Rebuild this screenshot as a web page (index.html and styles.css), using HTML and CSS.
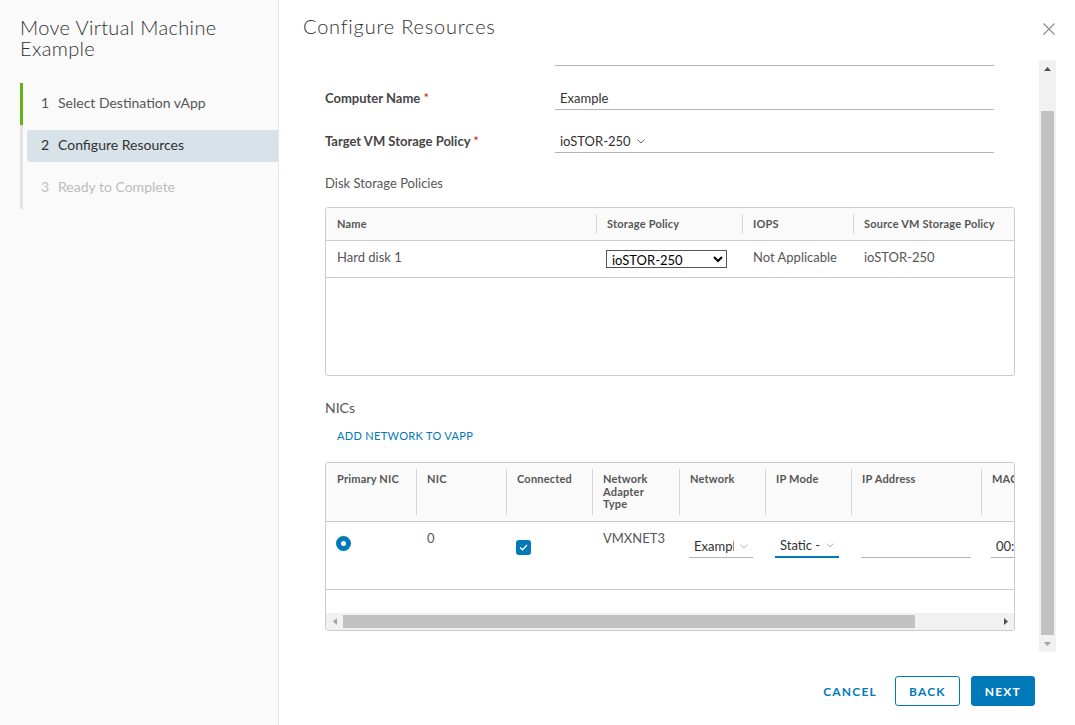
FILE: index.html
```html
<!DOCTYPE html>
<html lang="en">
<head>
  <meta charset="UTF-8" />
  <meta name="viewport" content="width=device-width, initial-scale=1.0"/>
  <title>Move Virtual Machine</title>
  <link rel="stylesheet" href="styles.css">
</head>
<body>
  <div class="wizard">
    <aside class="sidebar">
      <h1 class="wizard-title">Move Virtual Machine Example</h1>
      <ol class="steps">
        <li class="step done"><div class="step-label"><span class="num">1</span>Select Destination vApp</div></li>
        <li class="step active"><div class="step-label"><span class="num">2</span>Configure Resources</div></li>
        <li class="step disabled"><div class="step-label"><span class="num">3</span>Ready to Complete</div></li>
      </ol>
    </aside>

    <main class="panel">
      <header class="panel-header">
        <h2>Configure Resources</h2>
        <button class="close" type="button" aria-label="Close">
          <svg width="12" height="12" viewBox="0 0 12 12"><path d="M0.5 0.5 L11.5 11.5 M11.5 0.5 L0.5 11.5" stroke="#8c8c8c" stroke-width="1.1" fill="none"/></svg>
        </button>
      </header>

      <div class="panel-body">
        <div class="body-viewport" id="body-viewport">
          <div class="body-inner">
            <div class="form-row first">
              <span class="label-space"></span>
              <input type="text" id="vm-name" aria-label="Name"/>
            </div>

            <div class="form-row">
              <label for="computer-name">Computer Name <span class="req">*</span></label>
              <input type="text" id="computer-name" value="Example"/>
            </div>

            <div class="form-row">
              <label>Target VM Storage Policy <span class="req">*</span></label>
              <div class="dropdown wide">
                <span>ioSTOR-250</span>
                <svg class="chevron" width="8" height="5" viewBox="0 0 8 5"><polyline points="0.5,0.5 4,4 7.5,0.5" fill="none" stroke="#666" stroke-width="1"/></svg>
              </div>
            </div>

            <h3 class="section-title">Disk Storage Policies</h3>
            <div class="grid disk-grid">
              <table>
                <thead>
                  <tr>
                    <th class="d-name">Name</th>
                    <th class="d-policy">Storage Policy</th>
                    <th class="d-iops">IOPS</th>
                    <th class="d-source">Source VM Storage Policy</th>
                  </tr>
                </thead>
                <tbody>
                  <tr>
                    <td>Hard disk 1</td>
                    <td class="select-cell">
                      <select class="native-select">
                        <option>ioSTOR-250</option>
                      </select>
                    </td>
                    <td>Not Applicable</td>
                    <td>ioSTOR-250</td>
                  </tr>
                </tbody>
              </table>
            </div>

            <h3 class="section-title nics">NICs</h3>
            <button class="btn-flat" type="button">Add Network to vApp</button>

            <div class="grid nic-grid">
              <div class="nic-viewport">
                <table>
                  <thead>
                    <tr>
                      <th class="n-primary">Primary NIC</th>
                      <th class="n-nic">NIC</th>
                      <th class="n-conn">Connected</th>
                      <th class="n-type">Network Adapter Type</th>
                      <th class="n-net">Network</th>
                      <th class="n-mode">IP Mode</th>
                      <th class="n-ip">IP Address</th>
                      <th class="n-mac">MAC Address</th>
                    </tr>
                  </thead>
                  <tbody>
                    <tr>
                      <td><span class="radio"></span></td>
                      <td>0</td>
                      <td>
                        <span class="checkbox">
                          <svg width="9" height="7" viewBox="0 0 9 7"><polyline points="1,3.5 3.5,5.8 8,1" fill="none" stroke="#fff" stroke-width="1.3"/></svg>
                        </span>
                      </td>
                      <td>VMXNET3</td>
                      <td class="ctrl-cell">
                        <div class="dropdown small">
                          <span class="clip">Example</span>
                          <svg class="chevron" width="8" height="5" viewBox="0 0 8 5"><polyline points="0.5,0.5 4,4 7.5,0.5" fill="none" stroke="#b5b5b5" stroke-width="1"/></svg>
                        </div>
                      </td>
                      <td class="ctrl-cell">
                        <div class="dropdown small focused">
                          <span class="clip">Static - IP Pool</span>
                          <svg class="chevron" width="8" height="5" viewBox="0 0 8 5"><polyline points="0.5,0.5 4,4 7.5,0.5" fill="none" stroke="#b5b5b5" stroke-width="1"/></svg>
                        </div>
                      </td>
                      <td class="ctrl-cell"><input type="text" class="cell-input"/></td>
                      <td class="ctrl-cell"><input type="text" class="cell-input" value="00:50:56:01:00:8a"/></td>
                    </tr>
                  </tbody>
                </table>
              </div>
              <div class="hscroll">
                <div class="sb-btn">
                  <svg width="4" height="7" viewBox="0 0 4 7"><polygon points="4,0 4,7 0,3.5" fill="#a3a3a3"/></svg>
                </div>
                <div class="hscroll-track"><div class="hscroll-thumb"></div></div>
                <div class="sb-btn">
                  <svg width="4" height="7" viewBox="0 0 4 7"><polygon points="0,0 4,3.5 0,7" fill="#505050"/></svg>
                </div>
              </div>
            </div>
          </div>
        </div>

        <div class="vscroll">
          <div class="sb-btn">
            <svg width="7" height="4" viewBox="0 0 7 4"><polygon points="0,4 3.5,0 7,4" fill="#505050"/></svg>
          </div>
          <div class="vscroll-track"><div class="vscroll-thumb"></div></div>
          <div class="sb-btn">
            <svg width="7" height="4" viewBox="0 0 7 4"><polygon points="0,0 7,0 3.5,4" fill="#a3a3a3"/></svg>
          </div>
        </div>
      </div>

      <footer class="panel-footer">
        <button class="btn btn-link" type="button">Cancel</button>
        <button class="btn btn-outline" type="button">Back</button>
        <button class="btn btn-primary" type="button">Next</button>
      </footer>
    </main>
  </div>

  <script>
    // a caixa de conteúdo aparece rolada até o fim
    document.getElementById('body-viewport').scrollTop = 1000;
  </script>
</body>
</html>
```

FILE: styles.css
```css
* {
  box-sizing: border-box;
}

html, body {
  margin: 0;
  padding: 0;
  height: 100%;
  font-family: Lato, "Noto Sans", sans-serif;
  color: #565656;
  background-color: #ffffff;
}

.wizard {
  display: flex;
  height: 100vh;
}

/* lateral */
.sidebar {
  width: 279px;
  flex-shrink: 0;
  background-color: #fafafa;
  border-right: 1px solid #e6e6e6;
  padding-top: 17px;
}

.wizard-title {
  margin: 0 0 0 20px;
  font-size: 20px;
  line-height: 21px;
  font-weight: 300;
  letter-spacing: 0.35px;
  color: #313131;
}

.steps {
  list-style: none;
  margin: 24px 0 0 20px;
  padding: 0;
}

.step {
  border-left: 3px solid #e3e3e3;
  padding: 5px 0 5px 4px;
}

.step.done {
  border-left-color: #60b515;
}

.step-label {
  display: flex;
  align-items: center;
  height: 32px;
  padding: 0 0 3px 14px;
  font-size: 14px;
  color: #565656;
  border-radius: 3px 0 0 3px;
}

.num {
  width: 17px;
}

.step.active .step-label {
  background-color: #d8e3e9;
  color: #313131;
}

.step.disabled .step-label {
  color: #bdbdbd;
}

/* painel */
.panel {
  flex: 1;
  min-width: 0;
  display: flex;
  flex-direction: column;
  padding: 0 19px 0 24px;
}

.panel-header {
  height: 60px;
  flex-shrink: 0;
  display: flex;
  justify-content: space-between;
  align-items: flex-start;
  padding: 14px 1px 0 0;
}

.panel-header h2 {
  margin: 0;
  font-size: 20px;
  line-height: 24px;
  font-weight: 300;
  letter-spacing: 0.8px;
  color: #313131;
}

.close {
  border: none;
  background: none;
  padding: 0;
  margin-top: 9px;
  width: 12px;
  height: 12px;
  display: flex;
  cursor: pointer;
}

.panel-body {
  height: 592px;
  flex-shrink: 0;
  display: flex;
}

.body-viewport {
  flex: 1;
  min-width: 0;
  overflow: hidden;
}

.body-inner {
  padding: 21px 24px 21px 22px;
}

/* barras de rolagem desenhadas */
.vscroll {
  width: 17px;
  flex-shrink: 0;
  display: flex;
  flex-direction: column;
  background-color: #f1f1f1;
}

.sb-btn {
  width: 17px;
  height: 17px;
  flex-shrink: 0;
  display: flex;
  align-items: center;
  justify-content: center;
}

.vscroll-track {
  flex: 1;
  display: flex;
  flex-direction: column;
  padding: 34px 2px 0;
}

.vscroll-thumb {
  flex: 1;
  background-color: #c1c1c1;
}

.hscroll {
  height: 17px;
  display: flex;
  background-color: #f1f1f1;
}

.hscroll-track {
  flex: 1;
  display: flex;
  padding: 2px 0;
}

.hscroll-thumb {
  width: 572px;
  background-color: #c1c1c1;
}

/* formulário */
.form-row {
  display: flex;
  align-items: center;
  height: 24px;
  margin-bottom: 19px;
}

.form-row.first {
  margin-bottom: 20px;
}

label,
.label-space {
  width: 230px;
  flex-shrink: 0;
  font-size: 13px;
  font-weight: 700;
  color: #454545;
}

.req {
  color: #c92100;
  font-weight: 400;
}

.form-row input {
  width: 439px;
  height: 24px;
  border: none;
  border-bottom: 1px solid #b3b3b3;
  padding: 0 5px;
  font-family: inherit;
  font-size: 13px;
  color: #313131;
  outline: none;
}

.dropdown {
  display: flex;
  align-items: center;
  gap: 6px;
  height: 24px;
  border-bottom: 1px solid #b3b3b3;
  padding: 0 5px;
  font-size: 13px;
  color: #313131;
}

.dropdown.wide {
  width: 439px;
}

.dropdown.small {
  width: 64px;
  margin-top: 3px;
}

.dropdown.focused {
  border-bottom: 2px solid #0079b8;
}

.chevron {
  flex-shrink: 0;
  margin-top: 1px;
}

.clip {
  max-width: 42px;
  overflow: hidden;
  white-space: nowrap;
}

.section-title {
  margin: 21px 0 15px;
  font-size: 13px;
  line-height: 18px;
  font-weight: 400;
  color: #565656;
}

.section-title.nics {
  margin: 22px 0 5px;
  font-size: 14px;
  line-height: 20px;
}

.btn-flat {
  display: block;
  height: 24px;
  border: none;
  background: none;
  padding: 0 12px;
  font-family: inherit;
  font-size: 11px;
  font-weight: 400;
  letter-spacing: 0.03em;
  text-transform: uppercase;
  color: #0079b8;
  margin-bottom: 15px;
  cursor: pointer;
}

/* tabelas */
.grid {
  border: 1px solid #cccccc;
  border-radius: 3px;
  height: 169px;
  overflow: hidden;
}

.grid table {
  border-collapse: separate;
  border-spacing: 0;
  table-layout: fixed;
}

.disk-grid table {
  width: 100%;
}

.grid th {
  position: relative;
  background-color: #fafafa;
  border-bottom: 1px solid #cccccc;
  font-size: 11px;
  font-weight: 700;
  letter-spacing: 0.2px;
  color: #565656;
  text-align: left;
  vertical-align: top;
}

.grid th + th::before {
  content: "";
  position: absolute;
  left: 0;
  top: 6px;
  bottom: 6px;
  width: 1px;
  background-color: #d4d4d4;
}

.grid td {
  border-bottom: 1px solid #cccccc;
  font-size: 13px;
  vertical-align: top;
  color: #565656;
}

.disk-grid th {
  height: 33px;
  padding: 0 11px;
  line-height: 32px;
}

.disk-grid td {
  height: 37px;
  padding: 8px 10px 0 11px;
  line-height: 16px;
}

.disk-grid .select-cell {
  padding: 9px 10px 0 10px;
}

.d-name { width: 270px; }
.d-policy { width: 146px; }
.d-iops { width: 111px; }

.native-select {
  display: block;
  width: 121px;
  height: 18px;
  font-family: inherit;
  font-size: 13px;
  color: #000;
  background-color: #fff;
  border: 1px solid #555;
  border-radius: 0;
  padding: 0 1px;
}

.nic-viewport {
  height: 150px;
  overflow: hidden;
}

.nic-grid table {
  width: 785px;
}

.nic-grid th {
  height: 59px;
  padding: 10px 8px 0 11px;
  line-height: 12.5px;
}

.nic-grid th.n-type {
  padding-right: 22px;
}

.nic-grid td {
  height: 68px;
  padding: 9px 10px 0 11px;
  line-height: 14px;
}

.nic-grid .ctrl-cell {
  padding-left: 10px;
}

.n-primary { width: 90px; }
.n-nic { width: 90px; }
.n-conn { width: 86px; }
.n-type { width: 87px; }
.n-net { width: 86px; }
.n-mode { width: 86px; }
.n-ip { width: 130px; }
.n-mac { width: 130px; }

.radio {
  display: block;
  width: 15px;
  height: 15px;
  margin: 5px 0 0 -1px;
  border-radius: 50%;
  border: 5px solid #0079b8;
  background-color: #fff;
}

.checkbox {
  display: flex;
  align-items: center;
  justify-content: center;
  width: 15px;
  height: 15px;
  margin: 9px 0 0 -1px;
  border-radius: 3px;
  background-color: #0079b8;
}

.cell-input {
  display: block;
  width: 110px;
  height: 24px;
  margin-top: 3px;
  border: none;
  border-bottom: 1px solid #b3b3b3;
  padding: 0 5px;
  font-family: inherit;
  font-size: 13px;
  color: #313131;
  outline: none;
}

/* rodapé */
.panel-footer {
  flex: 1;
  display: flex;
  justify-content: flex-end;
  align-items: flex-start;
  gap: 11px;
  padding: 24px 21px 0 0;
}

.btn {
  height: 30px;
  padding: 0 13px;
  border: 1px solid transparent;
  border-radius: 3px;
  background: none;
  font-family: inherit;
  font-size: 12px;
  font-weight: 700;
  letter-spacing: 0.1em;
  text-transform: uppercase;
  color: #0079b8;
  cursor: pointer;
}

.btn-link {
  padding: 0 6px;
}

.btn-outline {
  border-color: #0079b8;
}

.btn-primary {
  background-color: #0079b8;
  border-color: #0079b8;
  color: #ffffff;
}
```
